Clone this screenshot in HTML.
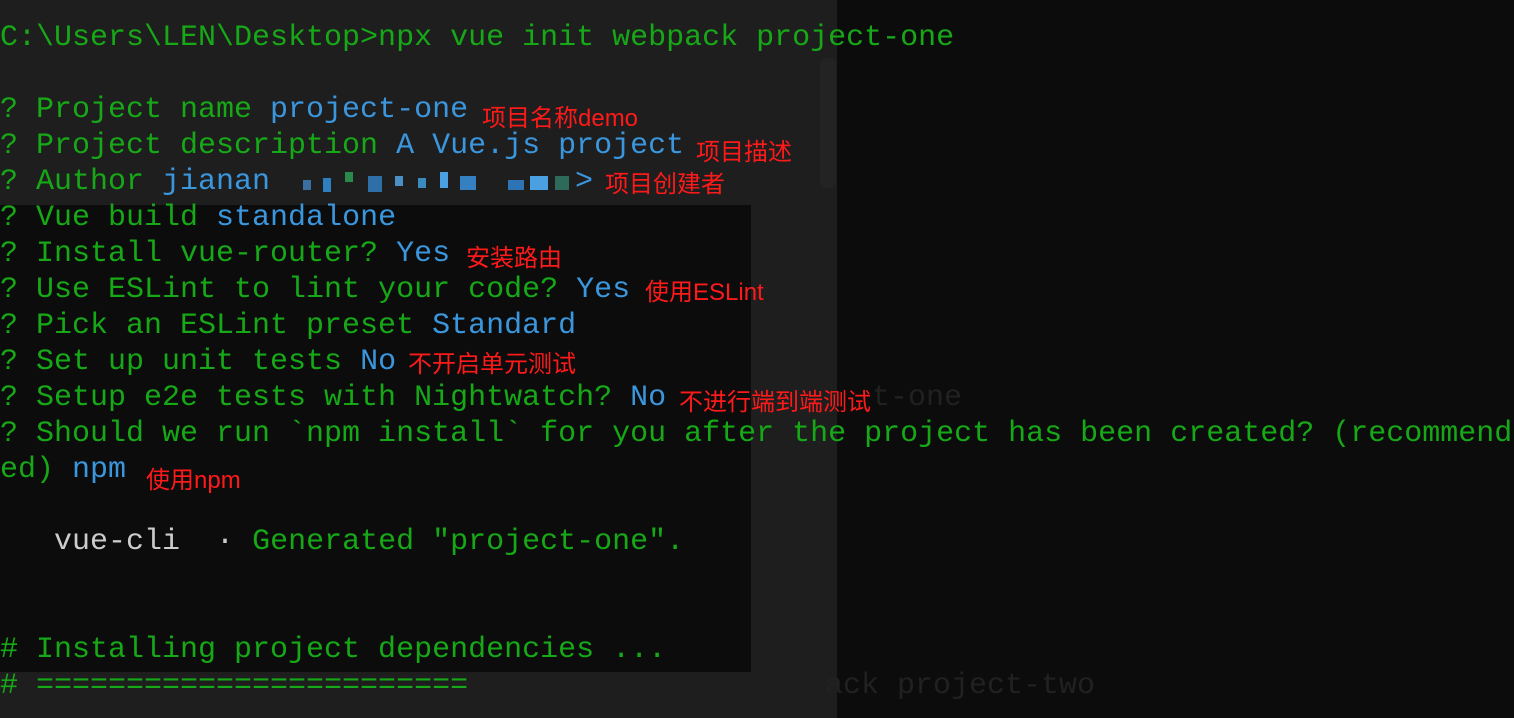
<!DOCTYPE html>
<html><head><meta charset="utf-8"><style>
html,body{margin:0;padding:0;width:1514px;height:718px;overflow:hidden;background:#0c0c0c}
.bg1{position:absolute;left:0;top:0;width:837px;height:718px;background:#1e1e1e}
.box{position:absolute;left:0;top:205px;width:751px;height:467px;background:#0c0c0c}
.sb{position:absolute;left:820px;top:58px;width:16px;height:130px;background:#232323;border-radius:6px}
.l{position:absolute;left:0;font-family:"Liberation Mono","Noto Sans CJK SC",monospace;font-size:30px;line-height:36px;height:36px;white-space:pre;color:#16a816;margin-top:2px}
.b{color:#3a96dd}.w{color:#cccccc}
.r{position:absolute;font-family:"Liberation Sans","Noto Sans CJK SC",sans-serif;font-size:24px;color:#ff1a1a;white-space:pre;line-height:26px}
.f{position:absolute;font-family:"Liberation Mono",monospace;font-size:30px;color:#212121;white-space:pre;line-height:36px}
.px{position:absolute;width:8px;height:10px}
</style></head><body>
<div class="bg1"></div>
<div class="sb"></div>
<div class="box"></div>
<div class="f" style="left:872px;top:380px">t-one</div>
<div class="f" style="left:825px;top:668px">ack project-two</div>
<div class="l" style="top:18px">C:\Users\LEN\Desktop&gt;npx vue init webpack project-one</div>
<div class="l" style="top:90px">? Project name <span class="b">project-one</span></div>
<div class="l" style="top:126px">? Project description <span class="b">A Vue.js project</span></div>
<div class="l" style="top:162px">? Author <span class="b">jianan</span></div>
<div class="px" style="left:303px;top:180px;background:#3a6fa0"></div>
<div class="px" style="left:323px;top:178px;background:#2e7fbf;height:14px"></div>
<div class="px" style="left:345px;top:172px;background:#2a8a4a"></div>
<div class="px" style="left:368px;top:176px;background:#2f6fa8;width:14px;height:16px"></div>
<div class="px" style="left:395px;top:176px;background:#4b8fc7"></div>
<div class="px" style="left:418px;top:178px;background:#3a8ac0"></div>
<div class="px" style="left:440px;top:172px;background:#4aa0e0;height:16px"></div>
<div class="px" style="left:460px;top:176px;background:#3580c0;width:16px;height:14px"></div>
<div class="px" style="left:508px;top:180px;background:#2e74b4;width:16px"></div>
<div class="px" style="left:530px;top:176px;background:#4aa0e0;width:18px;height:14px"></div>
<div class="px" style="left:555px;top:176px;background:#2e6a5a;width:14px;height:14px"></div>
<div class="l" style="top:162px;left:575px;color:#3a96dd">&gt;</div>
<div class="l" style="top:198px">? Vue build <span class="b">standalone</span></div>
<div class="l" style="top:234px">? Install vue-router? <span class="b">Yes</span></div>
<div class="l" style="top:270px">? Use ESLint to lint your code? <span class="b">Yes</span></div>
<div class="l" style="top:306px">? Pick an ESLint preset <span class="b">Standard</span></div>
<div class="l" style="top:342px">? Set up unit tests <span class="b">No</span></div>
<div class="l" style="top:378px">? Setup e2e tests with Nightwatch? <span class="b">No</span></div>
<div class="l" style="top:414px">? Should we run `npm install` for you after the project has been created? (recommend</div>
<div class="l" style="top:450px">ed) <span class="b">npm</span></div>
<div class="l" style="top:522px">   <span class="w">vue-cli  · </span>Generated "project-one".</div>
<div class="l" style="top:630px"># Installing project dependencies ...</div>
<div class="l" style="top:666px"># ========================</div>
<div class="r" style="left:482px;top:106px">项目名称demo</div>
<div class="r" style="left:696px;top:140px">项目描述</div>
<div class="r" style="left:605px;top:172px">项目创建者</div>
<div class="r" style="left:466px;top:246px">安装路由</div>
<div class="r" style="left:645px;top:280px">使用ESLint</div>
<div class="r" style="left:408px;top:352px">不开启单元测试</div>
<div class="r" style="left:679px;top:390px">不进行端到端测试</div>
<div class="r" style="left:146px;top:468px">使用npm</div>
</body></html>
